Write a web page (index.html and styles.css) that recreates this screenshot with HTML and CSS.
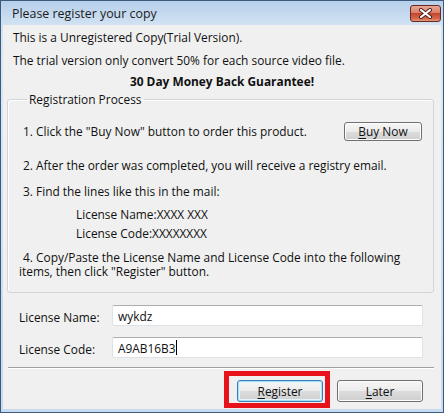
FILE: index.html
```html
<!DOCTYPE html>
<html lang="en">
<head>
  <meta charset="UTF-8" />
  <meta name="viewport" content="width=device-width, initial-scale=1" />
  <title>Please register your copy</title>
  <link rel="stylesheet" href="styles.css">
</head>
<body>
  <div class="window">
    <!-- Title bar -->
    <div class="titlebar">
      <span class="title">Please register your copy</span>
      <button class="close" type="button" aria-label="Close">
        <svg width="15" height="11" viewBox="0 0 15 11">
          <path d="M3 2 L12 9 M12 2 L3 9" stroke="#4a1d16" stroke-width="4" stroke-linecap="round" />
          <path d="M3 2 L12 9 M12 2 L3 9" stroke="#fff" stroke-width="2.2" stroke-linecap="round" />
        </svg>
      </button>
    </div>

    <!-- Dialog body -->
    <div class="client">
      <p class="line first">This is a Unregistered Copy(Trial Version).</p>
      <p class="line second">The trial version only convert 50% for each source video file.</p>
      <p class="guarantee">30 Day Money Back Guarantee!</p>

      <fieldset class="group">
        <legend>Registration Process</legend>
        <div class="step-buy">
          <span>1. Click the "Buy Now" button to order this product.</span>
          <button class="btn btn-buy" type="button"><u>B</u>uy Now</button>
        </div>
        <p class="step step2">2. After the order was completed, you will receive a registry email.</p>
        <p class="step step3">3. Find the lines like this in the mail:</p>
        <p class="sample sample-name">License Name:XXXX XXX</p>
        <p class="sample sample-code">License Code:XXXXXXXX</p>
        <p class="step4">4. Copy/Paste the License Name and License Code into the following items, then click "Register" button.</p>
      </fieldset>

      <form id="formRegister">
        <div class="field">
          <label for="licName">License Name:</label>
          <input type="text" id="licName" name="licName" value="wykdz" />
        </div>
        <div class="field field-code">
          <label for="licCode">License Code:</label>
          <div class="fake-input" id="licCode"><span>A9AB16B3</span><i class="caret"></i></div>
        </div>

        <div class="sep"></div>

        <div class="actions">
          <button class="btn btn-default" type="submit"><u>R</u>egister</button>
          <button class="btn" type="button"><u>L</u>ater</button>
          <!-- red annotation frame drawn over the Register button -->
          <span class="mark"></span>
        </div>
      </form>
    </div>
  </div>
</body>
</html>
```

FILE: styles.css
```css
* { box-sizing: border-box; }
html, body {
  margin: 0;
  padding: 0;
}
body {
  font-family: "Open Sans", "Liberation Sans", sans-serif;
  font-size: 11.9px;
  color: #111;
  background: #f0f0f0;
  width: 444px;
  height: 413px;
  overflow: hidden;
}
p { margin: 0; }

.window {
  width: 444px;
  height: 413px;
  display: flex;
  flex-direction: column;
  border: 1px solid #3b5a7c;
  padding: 0 2px 3px 2px;
  background: linear-gradient(to bottom, #b6cfea 0, #d2e2f3 24px, #d9e7f5 60px, #c6dbef 100%);
}
.titlebar {
  height: 24px;
  display: flex;
  align-items: center;
  justify-content: space-between;
  padding-left: 9px;
}
.title {
  font-size: 12.4px;
  color: #1b1b1b;
}
.close {
  width: 31px;
  height: 17px;
  padding: 0;
  border: 1px solid #6a2a20;
  border-radius: 3px;
  background: linear-gradient(to bottom, #e6a796 0, #d9806a 45%, #c5462f 50%, #d46a4f 85%, #e49a7e 100%);
  display: flex;
  align-items: center;
  justify-content: center;
}

.client {
  flex: 1;
  background: #f0f0f0;
  padding-top: 4px;
  display: flex;
  flex-direction: column;
}
.line {
  line-height: 16px;
  padding-left: 10px;
}
.second { margin-top: 7px; }
.guarantee {
  margin-top: 5px;
  line-height: 16px;
  text-align: center;
  font-weight: bold;
}

.group {
  margin: 2px 7px 0 4px;
  padding: 0 0 14px 0;
  border: 1px solid #d0d5da;
  border-radius: 3px;
  box-shadow: inset 1px 1px 0 #fff;
}
.group legend {
  margin-left: 19px;
  padding: 0 2px;
  line-height: 16px;
}
.step-buy {
  margin-top: 14px;
  padding: 0 11px 0 15px;
  height: 20px;
  display: flex;
  align-items: center;
  justify-content: space-between;
}
.step {
  padding-left: 15px;
  line-height: 16px;
}
.step2 { margin-top: 16px; }
.step3 { margin-top: 10px; }
.sample {
  padding-left: 68px;
  line-height: 16px;
}
.sample-name { margin-top: 7px; }
.sample-code { margin-top: 3px; }
.step4 {
  margin-top: 9px;
  padding: 0 14px 0 11px;
  line-height: 14px;
  text-indent: 4px;
}

.btn {
  font-family: inherit;
  font-size: 11.9px;
  color: #111;
  height: 22px;
  width: 86px;
  padding: 0;
  border: 1px solid #707070;
  border-radius: 3px;
  background: linear-gradient(to bottom, #f6f6f6 0, #ebebeb 50%, #dddddd 51%, #cfcfcf 100%);
  box-shadow: inset 0 0 0 1px #fcfcfc;
}
.btn u { text-decoration-thickness: 1px; text-underline-offset: 2px; }
.btn-buy {
  width: 78px;
  height: 19px;
}
.btn-default {
  border-color: #3c7fb1;
  box-shadow: inset 0 0 0 1px #a6e0f8, inset 0 0 0 2px #e3f4fc;
}

.field {
  margin-top: 12px;
  padding: 0 18px 0 16px;
  display: flex;
  align-items: center;
  height: 21px;
}
.field-code { margin-top: 11px; }
.field label {
  width: 93px;
  padding-top: 3px;
}
.field input,
.fake-input {
  flex: 1;
  height: 21px;
  font-family: inherit;
  font-size: 11.9px;
  color: #111;
  padding: 0 5px;
  border: 1px solid #dde2e8;
  border-top-color: #abadb3;
  border-radius: 2px;
  background: #fff;
  outline: none;
}
.fake-input {
  display: flex;
  align-items: center;
}
.caret {
  display: inline-block;
  width: 1px;
  height: 15px;
  background: #000;
}

.sep {
  margin: 9px 7px 0 5px;
  border-top: 1px solid #a0a0a0;
  border-bottom: 1px solid #fff;
}
.actions {
  position: relative;
  margin-top: 11px;
  padding-right: 18px;
  display: flex;
  justify-content: flex-end;
  gap: 14px;
}
.mark {
  position: absolute;
  left: 221px;
  top: -9px;
  width: 106px;
  height: 37px;
  border: 5px solid #e8121b;
}
```
